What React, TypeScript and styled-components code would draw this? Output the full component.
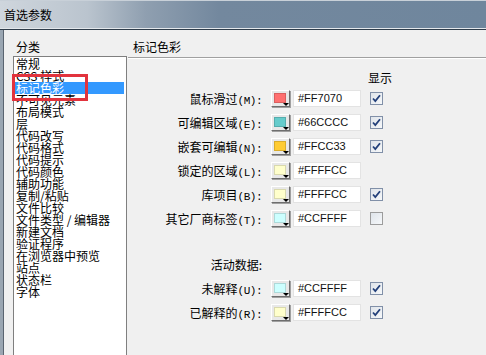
import styled, { createGlobalStyle } from "styled-components";

const GlobalStyle = createGlobalStyle`
  html, body {
    margin: 0;
    padding: 0;
    background: #f0f0f0;
  }
  body {
    font-family: "Noto Sans CJK SC", "Liberation Sans", sans-serif;
    font-size: 12px;
    color: #000;
  }
`

const categories = [
  "常规", "CSS 样式", "标记色彩", "不可见元素", "布局模式", "层",
  "代码改写", "代码格式", "代码提示", "代码颜色", "辅助功能", "复制/粘贴",
  "文件比较", "文件类型 / 编辑器", "新建文档", "验证程序", "在浏览器中预览",
  "站点", "状态栏", "字体",
]

type ColorRow = { label: string; key: string; color: string; show?: boolean }

const markRows: ColorRow[] = [
  { label: "鼠标滑过", key: "M", color: "#FF7070", show: true },
  { label: "可编辑区域", key: "E", color: "#66CCCC", show: true },
  { label: "嵌套可编辑", key: "N", color: "#FFCC33", show: true },
  { label: "锁定的区域", key: "L", color: "#FFFFCC" },
  { label: "库项目", key: "B", color: "#FFFFCC", show: true },
  { label: "其它厂商标签", key: "T", color: "#CCFFFF", show: false },
]

const activeRows: ColorRow[] = [
  { label: "未解释", key: "U", color: "#CCFFFF", show: true },
  { label: "已解释的", key: "R", color: "#FFFFCC", show: true },
]

function CheckBox({ checked }: { checked: boolean }) {
  return (
    <Check $checked={checked}>
      {checked && (
        <svg width="11" height="11" viewBox="0 0 11 11">
          <path d="M2 5.5 L4.3 8 L9 2.2" fill="none" stroke="#23407a" strokeWidth="1.8" />
        </svg>
      )}
    </Check>
  )
}

function ColorPickerRow({ row }: { row: ColorRow }) {
  return (
    <Row>
      <Label>{row.label}<Key>({row.key}):</Key></Label>
      <Swatch>
        <SwatchFill $color={row.color} />
        <Arrow />
      </Swatch>
      <Field>{row.color}</Field>
      {row.show !== undefined && <CheckBox checked={row.show} />}
    </Row>
  )
}

export default function App() {
  return (
    <>
      <GlobalStyle />
      <Window>
        <TitleBar>首选参数</TitleBar>
        <Body>
          <Sidebar>
            <Caption>分类</Caption>
            <ListBox>
              {categories.map((c, i) => (
                <Item key={c} $selected={i === 2}>{c}</Item>
              ))}
              <Mark />
            </ListBox>
          </Sidebar>
          <Content>
            <Header>标记色彩</Header>
            <Form>
              <ShowRow>显示</ShowRow>
              {markRows.map((r) => <ColorPickerRow key={r.key} row={r} />)}
              <SectionRow>
                <Label>活动数据:</Label>
              </SectionRow>
              {activeRows.map((r) => <ColorPickerRow key={r.key} row={r} />)}
            </Form>
          </Content>
        </Body>
      </Window>
    </>
  )
}

const Window = styled.div`
  display: flex;
  flex-direction: column;
  width: 486px;
  height: 355px;
  overflow: hidden;
  background: #f0f0f0;
`
const TitleBar = styled.div`
  height: 29px;
  flex-shrink: 0;
  box-sizing: border-box;
  padding-left: 4px;
  line-height: 27px;
  font-size: 12px;
  background: linear-gradient(90deg, #cfd6dd 0%, #bac4ce 18%, #8f9fb0 30%, #73889e 45%, #6f869d 100%);
  border-top: 1px solid #c8d0d8;
  border-bottom: 1px solid #e4e8ec;
  box-shadow: 0 1px 0 #2e3c4a;
  margin-bottom: 1px;
`
const Body = styled.div`
  flex: 1;
  display: flex;
  border-left: 3px solid #9aa6b2;
  box-shadow: inset 1px 0 0 #5a6470;
  min-height: 0;
`
const Sidebar = styled.div`
  display: flex;
  flex-direction: column;
  padding-left: 10px;
  width: 114px;
  flex-shrink: 0;
`
const Caption = styled.div`
  padding: 9px 0 0 3px;
  height: 16px;
  line-height: 16px;
  margin-bottom: 1px;
`
const ListBox = styled.div`
  position: relative;
  flex: 1;
  background: #fff;
  border: 1px solid #7f7f7f;
  border-bottom: none;
  padding-top: 1px;
`
const Item = styled.div<{ $selected?: boolean }>`
  height: 12px;
  line-height: 12px;
  padding-left: 2px;
  margin-right: 2px;
  white-space: nowrap;
  background: ${(p) => (p.$selected ? "#3399ff" : "transparent")};
  color: ${(p) => (p.$selected ? "#fff" : "#000")};
`
const Mark = styled.div`
  position: absolute;
  left: -2px;
  top: 17px;
  width: 70px;
  height: 21px;
  border: 3px solid #e2333d;
`
const Content = styled.div`
  flex: 1;
  display: flex;
  flex-direction: column;
  padding-left: 1px;
`
const Header = styled.div`
  padding: 9px 0 2px 5px;
  line-height: 16px;
  border-bottom: 1px solid #a0a0a0;
  box-shadow: 0 1px 0 #fff;
`
const Form = styled.div`
  display: flex;
  flex-direction: column;
  padding-top: 11px;
`
const ShowRow = styled.div`
  height: 17px;
  line-height: 17px;
  padding-left: 240px;
`
const Row = styled.div`
  display: flex;
  align-items: center;
  height: 24px;
`
const SectionRow = styled(Row)`
  margin-top: 22px;
`
const Label = styled.div`
  width: 134px;
  text-align: right;
  white-space: nowrap;
`
const Key = styled.span`
  font-family: "Liberation Mono", "Noto Sans CJK SC", monospace;
  font-size: 11px;
  letter-spacing: -0.5px;
`
const Swatch = styled.div`
  position: relative;
  margin-left: 9px;
  width: 19px;
  height: 17px;
  box-sizing: border-box;
  border: 1px solid;
  border-color: #ffffff #6e6e6e #6e6e6e #ffffff;
  box-shadow: 1px 1px 0 #a0a0a0;
  background: #e8e8e8;
  padding: 2px 3px 3px 2px;
`
const SwatchFill = styled.div<{ $color: string }>`
  width: 100%;
  height: 100%;
  box-sizing: border-box;
  border: 1px solid rgba(0, 0, 0, 0.15);
  background: ${(p) => p.$color};
`
const Arrow = styled.div`
  position: absolute;
  right: 0;
  bottom: 0;
  width: 0;
  height: 0;
  border-left: 3px solid transparent;
  border-right: 3px solid transparent;
  border-top: 3px solid #000;
`
const Field = styled.div`
  margin-left: 3px;
  width: 68px;
  height: 17px;
  box-sizing: border-box;
  background: #fff;
  border: 1px solid #e3e3e3;
  padding-left: 4px;
  line-height: 15px;
  font-family: "Liberation Sans", Arial, sans-serif;
  font-size: 11px;
  color: #111;
`
const Check = styled.div<{ $checked: boolean }>`
  margin-left: 9px;
  width: 13px;
  height: 13px;
  box-sizing: border-box;
  border: 1px solid ${(p) => (p.$checked ? "#8190a8" : "#9c9c9c")};
  background: linear-gradient(135deg, #dfe4ea 0%, #f6f8fa 100%);
  display: flex;
  align-items: center;
  justify-content: center;
`
